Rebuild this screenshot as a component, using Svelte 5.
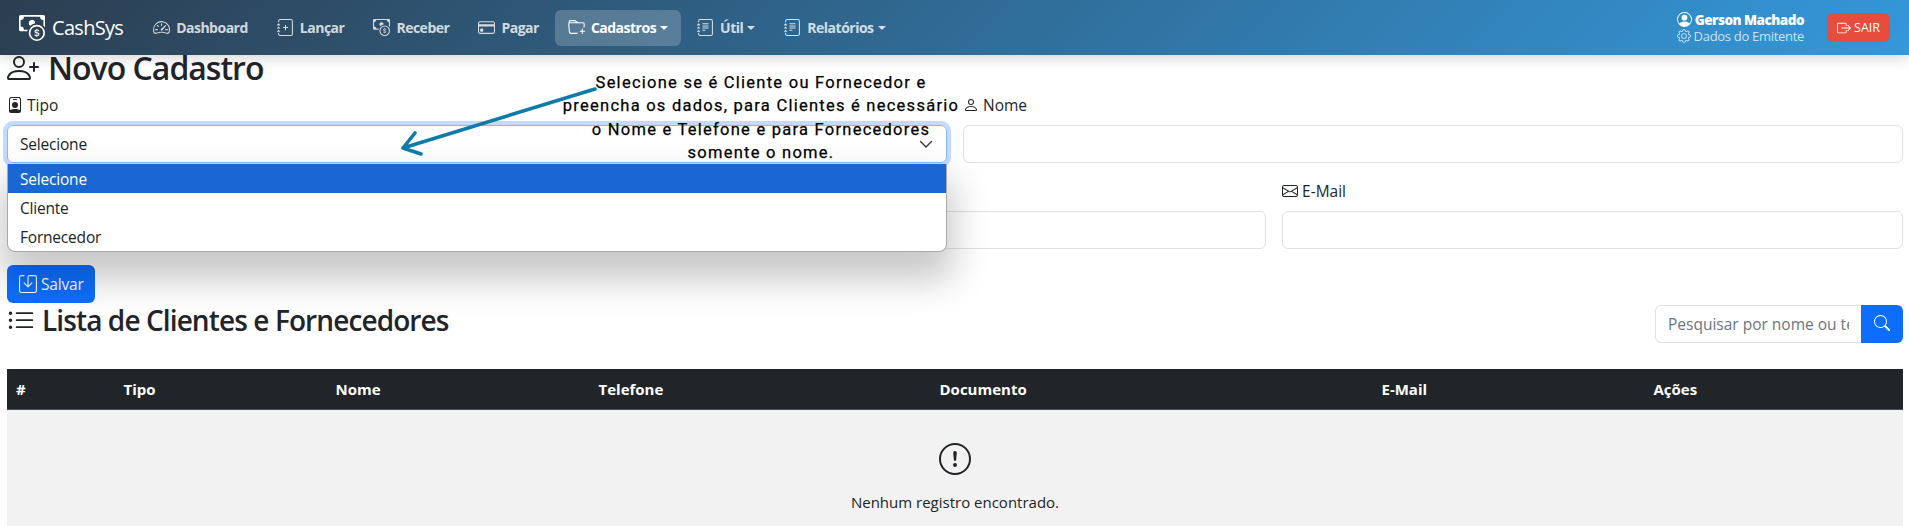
<script>
	const J = 'M3 0h10a2 2 0 0 1 2 2v12a2 2 0 0 1-2 2H3a2 2 0 0 1-2-2v-1h1v1a1 1 0 0 0 1 1h10a1 1 0 0 0 1-1V2a1 1 0 0 0-1-1H3a1 1 0 0 0-1 1v1H1V2a2 2 0 0 1 2-2';
	const JB = 'M1 5v-.5a.5.5 0 0 1 1 0V5h.5a.5.5 0 0 1 0 1h-2a.5.5 0 0 1 0-1zm0 3v-.5a.5.5 0 0 1 1 0V8h.5a.5.5 0 0 1 0 1h-2a.5.5 0 0 1 0-1zm0 3v-.5a.5.5 0 0 1 1 0v.5h.5a.5.5 0 0 1 0 1h-2a.5.5 0 0 1 0-1z';
	const icons = {
		speedometer: ['M8 4a.5.5 0 0 1 .5.5V6a.5.5 0 0 1-1 0V4.5A.5.5 0 0 1 8 4M3.732 5.732a.5.5 0 0 1 .707 0l.915.914a.5.5 0 1 1-.708.708l-.914-.915a.5.5 0 0 1 0-.707M2 10a.5.5 0 0 1 .5-.5h1.586a.5.5 0 0 1 0 1H2.5A.5.5 0 0 1 2 10m9.5 0a.5.5 0 0 1 .5-.5h1.5a.5.5 0 0 1 0 1H12a.5.5 0 0 1-.5-.5m.754-4.246a.39.39 0 0 0-.527-.02L7.547 9.31a.91.91 0 1 0 1.302 1.258l3.434-4.297a.39.39 0 0 0-.029-.518z', 'M0 10a8 8 0 1 1 15.547 2.661c-.442 1.253-1.845 1.602-2.932 1.25C11.309 13.488 9.475 13 8 13c-1.474 0-3.31.488-4.615.911-1.087.352-2.49.003-2.932-1.25A8 8 0 0 1 0 10m8-7a7 7 0 0 0-6.603 9.329c.203.575.923.876 1.68.63C4.397 12.533 6.358 12 8 12s3.604.532 4.923.96c.757.245 1.477-.056 1.68-.631A7 7 0 0 0 8 3'],
		journalPlus: ['M8 5.5a.5.5 0 0 1 .5.5v1.5H10a.5.5 0 0 1 0 1H8.5V10a.5.5 0 0 1-1 0V8.5H6a.5.5 0 0 1 0-1h1.5V6a.5.5 0 0 1 .5-.5', J, JB],
		journalText: ['M5 10.5a.5.5 0 0 1 .5-.5h2a.5.5 0 0 1 0 1h-2a.5.5 0 0 1-.5-.5m0-2a.5.5 0 0 1 .5-.5h5a.5.5 0 0 1 0 1h-5a.5.5 0 0 1-.5-.5m0-2a.5.5 0 0 1 .5-.5h5a.5.5 0 0 1 0 1h-5a.5.5 0 0 1-.5-.5m0-2a.5.5 0 0 1 .5-.5h5a.5.5 0 0 1 0 1h-5a.5.5 0 0 1-.5-.5', J, JB],
		cash: ['M11 15a4 4 0 1 0 0-8 4 4 0 0 0 0 8m5-4a5 5 0 1 1-10 0 5 5 0 0 1 10 0', 'M9.438 11.944c.047.596.518 1.06 1.363 1.116v.44h.375v-.443c.875-.061 1.386-.529 1.386-1.207 0-.618-.39-.936-1.09-1.1l-.296-.07v-1.2c.376.043.614.248.671.532h.658c-.047-.575-.54-1.024-1.329-1.073V8.5h-.375v.45c-.747.073-1.255.522-1.255 1.158 0 .562.378.92 1.007 1.066l.248.061v1.272c-.384-.058-.639-.27-.696-.563h-.668zm1.36-1.354c-.369-.085-.569-.26-.569-.522 0-.294.216-.514.572-.578v1.1zm.432.746c.449.104.655.272.655.569 0 .339-.257.571-.709.614v-1.195z', 'M1 0a1 1 0 0 0-1 1v8a1 1 0 0 0 1 1h4.083q.088-.517.258-1H3a2 2 0 0 0-2-2V3a2 2 0 0 0 2-2h10a2 2 0 0 0 2 2v3.528c.38.34.717.728 1 1.154V1a1 1 0 0 0-1-1z', 'M9.998 5.083 10 5a2 2 0 1 0-3.132 1.65 6 6 0 0 1 3.13-1.567'],
		card: ['M0 4a2 2 0 0 1 2-2h12a2 2 0 0 1 2 2v8a2 2 0 0 1-2 2H2a2 2 0 0 1-2-2zm2-1a1 1 0 0 0-1 1v1h14V4a1 1 0 0 0-1-1zm13 4H1v5a1 1 0 0 0 1 1h12a1 1 0 0 0 1-1z', 'M2 10a1 1 0 0 1 1-1h1a1 1 0 0 1 1 1v1a1 1 0 0 1-1 1H3a1 1 0 0 1-1-1z'],
		folderPlus: ['m.5 3 .04.87a2 2 0 0 0-.342 1.311l.637 7A2 2 0 0 0 2.826 14H9v-1H2.826a1 1 0 0 1-.995-.91l-.637-7A1 1 0 0 1 2.19 4h11.62a1 1 0 0 1 .996 1.09L14.54 8h1.005l.256-2.819A2 2 0 0 0 13.81 3H9.828a2 2 0 0 1-1.414-.586l-.828-.828A2 2 0 0 0 6.172 1H2.5a2 2 0 0 0-2 2m5.672-1a1 1 0 0 1 .707.293L7.586 3H2.19q-.362.002-.683.12L1.5 2.98a1 1 0 0 1 1-.98z', 'M13.5 9a.5.5 0 0 1 .5.5V11h1.5a.5.5 0 1 1 0 1H14v1.5a.5.5 0 1 1-1 0V12h-1.5a.5.5 0 0 1 0-1H13V9.5a.5.5 0 0 1 .5-.5'],
		personCircle: ['M11 6a3 3 0 1 1-6 0 3 3 0 0 1 6 0', 'M0 8a8 8 0 1 1 16 0A8 8 0 0 1 0 8m8-7a7 7 0 0 0-5.468 11.37C3.242 11.226 4.805 10 8 10s4.757 1.225 5.468 2.37A7 7 0 0 0 8 1'],
		gear: ['M8 4.754a3.246 3.246 0 1 0 0 6.492 3.246 3.246 0 0 0 0-6.492M5.754 8a2.246 2.246 0 1 1 4.492 0 2.246 2.246 0 0 1-4.492 0', 'M9.796 1.343c-.527-1.79-3.065-1.79-3.592 0l-.094.319a.873.873 0 0 1-1.255.52l-.292-.16c-1.64-.892-3.433.902-2.54 2.541l.159.292a.873.873 0 0 1-.52 1.255l-.319.094c-1.79.527-1.79 3.065 0 3.592l.319.094a.873.873 0 0 1 .52 1.255l-.16.292c-.892 1.64.901 3.434 2.541 2.54l.292-.159a.873.873 0 0 1 1.255.52l.094.319c.527 1.79 3.065 1.79 3.592 0l.094-.319a.873.873 0 0 1 1.255-.52l.292.16c1.64.893 3.434-.902 2.54-2.541l-.159-.292a.873.873 0 0 1 .52-1.255l.319-.094c1.79-.527 1.79-3.065 0-3.592l-.319-.094a.873.873 0 0 1-.52-1.255l.16-.292c.893-1.64-.902-3.433-2.541-2.54l-.292.159a.873.873 0 0 1-1.255-.52zm-2.633.283c.246-.835 1.428-.835 1.674 0l.094.319a1.873 1.873 0 0 0 2.693 1.115l.291-.16c.764-.415 1.6.42 1.184 1.185l-.159.292a1.873 1.873 0 0 0 1.116 2.692l.318.094c.835.246.835 1.428 0 1.674l-.319.094a1.873 1.873 0 0 0-1.115 2.693l.16.291c.415.764-.42 1.6-1.185 1.184l-.291-.159a1.873 1.873 0 0 0-2.693 1.116l-.094.318c-.246.835-1.428.835-1.674 0l-.094-.319a1.873 1.873 0 0 0-2.692-1.115l-.292.16c-.764.415-1.6-.42-1.184-1.185l.159-.291A1.873 1.873 0 0 0 1.945 8.93l-.319-.094c-.835-.246-.835-1.428 0-1.674l.319-.094A1.873 1.873 0 0 0 3.06 4.377l-.16-.292c-.415-.764.42-1.6 1.185-1.184l.292.159a1.873 1.873 0 0 0 2.692-1.115z'],
		logout: ['M10 12.5a.5.5 0 0 1-.5.5h-8a.5.5 0 0 1-.5-.5v-9a.5.5 0 0 1 .5-.5h8a.5.5 0 0 1 .5.5v2a.5.5 0 0 0 1 0v-2A1.5 1.5 0 0 0 9.5 2h-8A1.5 1.5 0 0 0 0 3.5v9A1.5 1.5 0 0 0 1.5 14h8a1.5 1.5 0 0 0 1.5-1.5v-2a.5.5 0 0 0-1 0z', 'M15.854 8.354a.5.5 0 0 0 0-.708l-3-3a.5.5 0 0 0-.708.708L14.293 7.5H5.5a.5.5 0 0 0 0 1h8.793l-2.147 2.146a.5.5 0 0 0 .708.708z'],
		personPlus: ['M6 8a3 3 0 1 0 0-6 3 3 0 0 0 0 6m2-3a2 2 0 1 1-4 0 2 2 0 0 1 4 0m4 8c0 1-1 1-1 1H1s-1 0-1-1 1-4 6-4 6 3 6 4m-1-.004c-.001-.246-.154-.986-.832-1.664C9.516 10.68 8.289 10 6 10s-3.516.68-4.168 1.332c-.678.678-.83 1.418-.832 1.664z', 'M13.5 5a.5.5 0 0 1 .5.5V7h1.5a.5.5 0 0 1 0 1H14v1.5a.5.5 0 0 1-1 0V8h-1.5a.5.5 0 0 1 0-1H13V5.5a.5.5 0 0 1 .5-.5'],
		badge: ['M6.5 2a.5.5 0 0 0 0 1h3a.5.5 0 0 0 0-1zM11 8a3 3 0 1 1-6 0 3 3 0 0 1 6 0', 'M4.5 0A2.5 2.5 0 0 0 2 2.5V14a2 2 0 0 0 2 2h8a2 2 0 0 0 2-2V2.5A2.5 2.5 0 0 0 11.5 0zM3 2.5A1.5 1.5 0 0 1 4.5 1h7A1.5 1.5 0 0 1 13 2.5v10.795a4.2 4.2 0 0 0-.776-.492C11.392 12.387 10.063 12 8 12s-3.392.387-4.224.803a4.2 4.2 0 0 0-.776.492z'],
		person: ['M8 8a3 3 0 1 0 0-6 3 3 0 0 0 0 6m2-3a2 2 0 1 1-4 0 2 2 0 0 1 4 0m4 8c0 1-1 1-1 1H3s-1 0-1-1 1-4 6-4 6 3 6 4m-1-.004c-.001-.246-.154-.986-.832-1.664C11.516 10.68 10.289 10 8 10s-3.516.68-4.168 1.332c-.678.678-.83 1.418-.832 1.664z'],
		envelope: ['M0 4a2 2 0 0 1 2-2h12a2 2 0 0 1 2 2v8a2 2 0 0 1-2 2H2a2 2 0 0 1-2-2zm2-1a1 1 0 0 0-1 1v.217l7 4.2 7-4.2V4a1 1 0 0 0-1-1zm13 2.383-4.708 2.825L15 11.105zm-.034 6.876-5.64-3.471L8 9.583l-1.326-.795-5.64 3.47A1 1 0 0 0 2 13h12a1 1 0 0 0 .966-.741M1 11.105l4.708-2.897L1 5.383z'],
		list: ['M5 11.5a.5.5 0 0 1 .5-.5h9a.5.5 0 0 1 0 1h-9a.5.5 0 0 1-.5-.5m0-4a.5.5 0 0 1 .5-.5h9a.5.5 0 0 1 0 1h-9a.5.5 0 0 1-.5-.5m0-4a.5.5 0 0 1 .5-.5h9a.5.5 0 0 1 0 1h-9a.5.5 0 0 1-.5-.5m-3 1a1 1 0 1 0 0-2 1 1 0 0 0 0 2m0 4a1 1 0 1 0 0-2 1 1 0 0 0 0 2m0 4a1 1 0 1 0 0-2 1 1 0 0 0 0 2'],
		search: ['M11.742 10.344a6.5 6.5 0 1 0-1.397 1.398h-.001q.044.06.098.115l3.85 3.85a1 1 0 0 0 1.415-1.414l-3.85-3.85a1 1 0 0 0-.115-.1zM12 6.5a5.5 5.5 0 1 1-11 0 5.5 5.5 0 0 1 11 0'],
		alert: ['M8 15A7 7 0 1 1 8 1a7 7 0 0 1 0 14m0 1A8 8 0 1 0 8 0a8 8 0 0 0 0 16', 'M7.002 11a1 1 0 1 1 2 0 1 1 0 0 1-2 0M7.1 4.995a.905.905 0 1 1 1.8 0l-.35 3.507a.552.552 0 0 1-1.1 0z'],
		save: ['M2 1a1 1 0 0 0-1 1v12a1 1 0 0 0 1 1h12a1 1 0 0 0 1-1V2a1 1 0 0 0-1-1H9.5a1 1 0 0 0-1 1v7.293l2.646-2.647a.5.5 0 0 1 .708.708l-3.5 3.5a.5.5 0 0 1-.708 0l-3.5-3.5a.5.5 0 1 1 .708-.708L7.5 9.293V2a2 2 0 0 1 2-2H14a2 2 0 0 1 2 2v12a2 2 0 0 1-2 2H2a2 2 0 0 1-2-2V2a2 2 0 0 1 2-2h2.5a.5.5 0 0 1 0 1z']
	};

	const menu = [
		{ icon: 'speedometer', label: 'Dashboard' },
		{ icon: 'journalPlus', label: 'Lançar' },
		{ icon: 'cash', label: 'Receber' },
		{ icon: 'card', label: 'Pagar' },
		{ icon: 'folderPlus', label: 'Cadastros', caret: true, active: true },
		{ icon: 'journalText', label: 'Útil', caret: true },
		{ icon: 'journalText', label: 'Relatórios', caret: true }
	];
	const columns = ['#', 'Tipo', 'Nome', 'Telefone', 'Documento', 'E-Mail', 'Ações'];
</script>

{#snippet icon(name, size)}
	<svg class="bi" width={size} height={size} viewBox="0 0 16 16" fill="currentColor" fill-rule="evenodd">
		{#each icons[name] as d}<path {d} />{/each}
	</svg>
{/snippet}

<nav class="navbar">
	<a class="brand" href="#top">{@render icon('cash', 26)}<span>CashSys</span></a>
	<ul class="menu">
		{#each menu as item}
			<li class:active={item.active}>
				{@render icon(item.icon, 17)}
				<span>{item.label}</span>
				{#if item.caret}<i class="caret"></i>{/if}
			</li>
		{/each}
	</ul>
	<div class="user">
		<div class="user-name">{@render icon('personCircle', 15)}<b>Gerson Machado</b></div>
		<div class="user-sub">{@render icon('gear', 14)}<span>Dados do Emitente</span></div>
	</div>
	<button class="logout">{@render icon('logout', 14)}<span>SAIR</span></button>
</nav>

<main>
	<h2>{@render icon('personPlus', 32)}<span>Novo Cadastro</span></h2>

	<div class="form-row two">
		<div class="field select-field">
			<label for="tipo">{@render icon('badge', 16)} Tipo</label>
			<div class="select" id="tipo">
				<span>Selecione</span>
				<svg width="16" height="16" viewBox="0 0 16 16"><path d="m2.5 5.5 5.5 5.5 5.5-5.5" fill="none" stroke="#343a40" stroke-width="1.4" stroke-linecap="round" stroke-linejoin="round" /></svg>
			</div>
			<div class="options">
				<div class="option selected">Selecione</div>
				<div class="option">Cliente</div>
				<div class="option">Fornecedor</div>
			</div>
		</div>
		<div class="field">
			<label for="nome">{@render icon('person', 16)} Nome</label>
			<input id="nome" />
		</div>
	</div>

	<div class="form-row three">
		<div class="field">
			<label for="telefone" aria-label="Telefone"></label>
			<input id="telefone" />
		</div>
		<div class="field">
			<label for="documento" aria-label="Documento"></label>
			<input id="documento" />
		</div>
		<div class="field">
			<label for="email">{@render icon('envelope', 16)} E-Mail</label>
			<input id="email" />
		</div>
	</div>

	<button class="save">{@render icon('save', 18)}<span>Salvar</span></button>

	<div class="list-head">
		<h3>{@render icon('list', 28)}<span>Lista de Clientes e Fornecedores</span></h3>
		<div class="search">
			<input placeholder="Pesquisar por nome ou telefone" />
			<button aria-label="Pesquisar">{@render icon('search', 16)}</button>
		</div>
	</div>

	<div class="table">
		<div class="thead">
			{#each columns as col}<div>{col}</div>{/each}
		</div>
		<div class="empty">
			{@render icon('alert', 32)}
			<p>Nenhum registro encontrado.</p>
		</div>
	</div>
</main>

<aside class="tip">
	Selecione se é Cliente ou Fornecedor e<br />
	preencha os dados, para Clientes é necessário<br />
	o Nome e Telefone e para Fornecedores<br />
	somente o nome.
</aside>
<svg class="arrow" width="220" height="80" viewBox="0 0 220 80">
	<path d="M203 7 L11 66 M23 51 L11 66 L29 72" fill="none" stroke="#0f7ca8" stroke-width="3.6" stroke-linecap="round" stroke-linejoin="round" />
</svg>

<style>
	:global(body) {
		background: #fff;
		color: #212529;
		font-family: "Open Sans", "Noto Sans", sans-serif;
		font-size: 16px;
		overflow: hidden;
		height: 526px;
	}

	.bi {
		flex: none;
		vertical-align: -2px;
	}

	.navbar {
		position: relative;
		z-index: 2;
		height: 55px;
		box-sizing: border-box;
		display: flex;
		align-items: center;
		padding: 0 19px;
		background: linear-gradient(135deg, #2c3e50, #3498db);
		box-shadow: 0 4px 12px rgba(0, 0, 0, 0.15);
		color: #fff;
	}

	.brand {
		display: flex;
		align-items: center;
		gap: 7px;
		color: #fff;
		text-decoration: none;
		font-size: 20px;
		letter-spacing: -0.7px;
		margin-right: 17px;
	}

	.menu {
		display: flex;
		align-items: center;
		list-style: none;
		margin: 0;
		padding: 0;
		gap: 3px;
		flex: 1;
	}

	.menu li {
		display: flex;
		align-items: center;
		gap: 6px;
		height: 36px;
		padding: 0 13px;
		border-radius: 6px;
		font-size: 14px;
		font-weight: 700;
		letter-spacing: -0.5px;
		color: rgba(255, 255, 255, 0.8);
	}

	.menu li.active {
		background: rgba(255, 255, 255, 0.2);
		color: #fff;
	}

	.caret {
		margin-left: -2px;
		border-top: 4px solid;
		border-left: 4px solid transparent;
		border-right: 4px solid transparent;
	}

	.user {
		display: flex;
		flex-direction: column;
		align-items: flex-end;
		margin-right: 23px;
		line-height: 16px;
	}

	.user-name,
	.user-sub {
		display: flex;
		align-items: center;
		gap: 3px;
	}

	.user-name {
		font-size: 13.5px;
		letter-spacing: -0.5px;
	}

	.user-name b {
		font-weight: 800;
	}

	.user-sub {
		font-size: 13px;
		letter-spacing: -0.3px;
		color: rgba(255, 255, 255, 0.75);
	}

	.logout {
		display: flex;
		align-items: center;
		gap: 3px;
		height: 29px;
		padding: 0 10px;
		border: 0;
		border-radius: 6px;
		background: #e74c3c;
		color: #fff;
		font: inherit;
		font-size: 12.5px;
	}

	main {
		padding: 0 6px 0 7px;
		margin-top: -6px;
	}

	h2,
	h3 {
		display: flex;
		align-items: center;
		margin: 0;
		font-weight: 600;
		line-height: 1.2;
	}

	h2 {
		font-size: 32px;
		gap: 9px;
		letter-spacing: -1px;
	}

	h3 {
		font-size: 28px;
		gap: 7px;
		letter-spacing: -0.9px;
		margin-top: -1px;
	}

	.form-row {
		display: grid;
		gap: 16px;
	}

	.form-row.two {
		grid-template-columns: 1fr 1fr;
		margin-top: 6px;
		margin-bottom: 15.6px;
	}

	.form-row.three {
		grid-template-columns: 622px 621px 621px;
		margin-bottom: 16px;
	}

	.field {
		display: flex;
		flex-direction: column;
		position: relative;
	}

	label {
		display: block;
		min-height: 24px;
		font-size: 15.5px;
		line-height: 24px;
		margin-bottom: 8px;
	}

	input {
		box-sizing: border-box;
		height: 38px;
		width: 100%;
		padding: 6px 12px;
		border: 1px solid #dee2e6;
		border-radius: 6px;
		background: #fff;
		font: inherit;
		font-size: 15.5px;
	}

	.select {
		box-sizing: border-box;
		height: 38px;
		display: flex;
		align-items: center;
		justify-content: space-between;
		padding: 0 12px;
		border: 1px solid #86b7fe;
		border-radius: 6px;
		box-shadow: 0 0 0 4px rgba(13, 110, 253, 0.25);
		font-size: 15.5px;
		letter-spacing: -0.2px;
	}

	.options {
		position: absolute;
		z-index: 1;
		top: 70.6px;
		left: 0;
		right: 0;
		background: #fff;
		border-radius: 0 0 8px 8px;
		border: 1px solid #aaa;
		border-top: 0;
		box-sizing: border-box;
		overflow: hidden;
		box-shadow: 0 22px 36px 6px rgba(0, 0, 0, 0.22);
		font-size: 15.5px;
		letter-spacing: -0.2px;
	}

	.option {
		height: 29px;
		line-height: 31px;
		padding-left: 12px;
	}

	.option.selected {
		background: #1967d2;
		color: #fff;
	}

	.save {
		display: flex;
		align-items: center;
		gap: 4px;
		height: 38px;
		width: 88px;
		padding: 0 12px;
		border: 0;
		border-radius: 6px;
		background: #0d6efd;
		color: #fff;
		font: inherit;
		font-size: 15.5px;
		letter-spacing: -0.2px;
	}

	.list-head {
		display: flex;
		justify-content: space-between;
		align-items: flex-start;
		margin-top: 2px;
	}

	.search {
		display: flex;
		width: 248px;
	}

	.search input {
		flex: 1;
		min-width: 0;
		border-radius: 6px 0 0 6px;
		border-right: 0;
		font-size: 15.5px;
	}

	.search input::placeholder {
		color: #6c757d;
	}

	.search button {
		width: 42px;
		height: 38px;
		border: 0;
		border-radius: 0 6px 6px 0;
		background: #0d6efd;
		color: #fff;
	}

	.table {
		margin-top: 26px;
	}

	.thead {
		display: grid;
		grid-template-columns: 107.5px 212px 263px 341px 442px 272px 1fr;
		height: 41px;
		box-sizing: border-box;
		align-items: center;
		padding-left: 9px;
		background: #212529;
		border-bottom: 1px solid #495057;
		color: #fff;
		font-size: 15px;
		font-weight: 700;
	}

	.empty {
		display: flex;
		flex-direction: column;
		align-items: center;
		background: #f2f2f2;
		padding-top: 33px;
		height: 84px;
	}

	.empty p {
		margin: 17px 0 0;
		font-size: 15px;
	}

	.tip {
		position: absolute;
		z-index: 3;
		left: 541px;
		top: 71px;
		width: 440px;
		text-align: center;
		font-family: Roboto, sans-serif;
		font-size: 16.5px;
		font-weight: 400;
		line-height: 23.3px;
		letter-spacing: 1.25px;
		-webkit-text-stroke: 0.25px #000;
		color: #000;
	}

	.arrow {
		position: absolute;
		z-index: 3;
		left: 392px;
		top: 82px;
	}
</style>
